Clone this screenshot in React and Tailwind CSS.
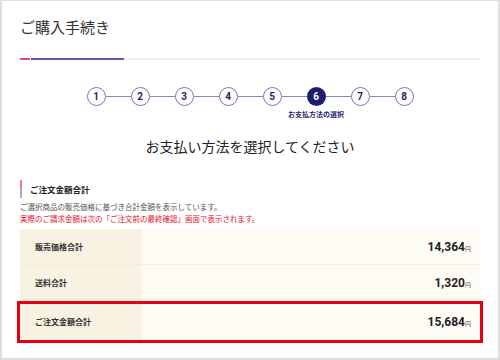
import React from 'react'

const jp = { fontFamily: '"Noto Sans CJK JP", "Noto Sans", sans-serif' }

const steps = [1, 2, 3, 4, 5, 6, 7, 8]

function Stepper() {
  return (
    <div className="flex justify-center items-start mt-[27px]">
      {steps.map((n, i) => (
        <React.Fragment key={n}>
          {i > 0 && <div className="w-[25px] h-px bg-[#8585c4] mt-[9px]" />}
          <div className="flex flex-col items-center w-[19px]">
            <div
              className={`w-[19px] h-[19px] rounded-full flex items-center justify-center text-[10px] font-bold leading-none ${
                n === 6 ? 'bg-[#1d1d6f] text-white' : 'border border-[#7474bd] text-[#1d1d6f] bg-white'
              }`}
              style={{ fontFamily: '"Roboto", "Liberation Sans", sans-serif' }}
            >
              {n}
            </div>
            {n === 6 && (
              <div className="mt-[4px] text-[7px] leading-[9px] font-bold text-[#1d1d6f] whitespace-nowrap" style={jp}>
                お支払方法の選択
              </div>
            )}
          </div>
        </React.Fragment>
      ))}
    </div>
  )
}

function Row({ label, value, last }) {
  return (
    <div className={`flex h-[36px] ${last ? '' : 'border-b border-[#f1ecdc]'}`}>
      <div className="w-[122px] bg-[#f7f2e2] flex items-center pl-[15px] text-[8px] font-bold text-[#333]" style={jp}>
        {label}
      </div>
      <div className="flex-1 bg-[#fdfbf3] flex items-center justify-end pr-[9px] text-[#222]">
        <span className="text-[12px] font-bold" style={{ fontFamily: '"Roboto", "Liberation Sans", sans-serif' }}>{value}</span>
        <span className="text-[6px] text-[#555] mt-[3px]" style={jp}>円</span>
      </div>
    </div>
  )
}

export default function App() {
  return (
    <div className="w-[500px] h-[360px] bg-white border-t border-l-2 border-r-2 border-b-2 border-[#dedede] overflow-hidden text-[#333]" style={jp}>
      <div className="ml-[18px] mt-[16px] text-[15px] leading-[20px] text-[#333]">ご購入手続き</div>

      <div className="ml-[18px] mt-[21px] w-[460px] h-[2px] flex">
        <div className="w-[10px] bg-[#f2475a]" />
        <div className="w-px bg-white" />
        <div className="w-[93px] bg-[#5b5bb2]" />
        <div className="flex-1 bg-[#f2f2f2]" />
      </div>

      <Stepper />

      <div className="mt-[17px] text-center text-[14px] leading-[20px] text-[#222]">お支払い方法を選択してください</div>

      <div className="mx-[18px] mt-[24px]">
        <div className="flex h-[18px]">
          <div className="w-[2px] flex flex-col">
            <div className="flex-1 bg-[#f07a8c]" />
            <div className="flex-1 bg-[#a8a8d6]" />
          </div>
          <div className="pl-[8px] flex items-center text-[8.5px] font-bold text-[#222]">ご注文金額合計</div>
        </div>

        <div className="mt-[3px] text-[7.5px] leading-[12px] text-[#555]">ご選択商品の販売価格に基づき合計金額を表示しています。</div>
        <div className="text-[7.5px] leading-[12px] text-[#e8102e]">実際のご請求金額は次の「ご注文前の最終確認」画面で表示されます。</div>

        <div className="mt-[4px]">
          <Row label="販売価格合計" value="14,364" />
          <Row label="送料合計" value="1,320" last />
          <div className="-mx-[3px] border-[3px] border-[#e60012]">
            <Row label="ご注文金額合計" value="15,684" last />
          </div>
        </div>
      </div>
    </div>
  )
}
